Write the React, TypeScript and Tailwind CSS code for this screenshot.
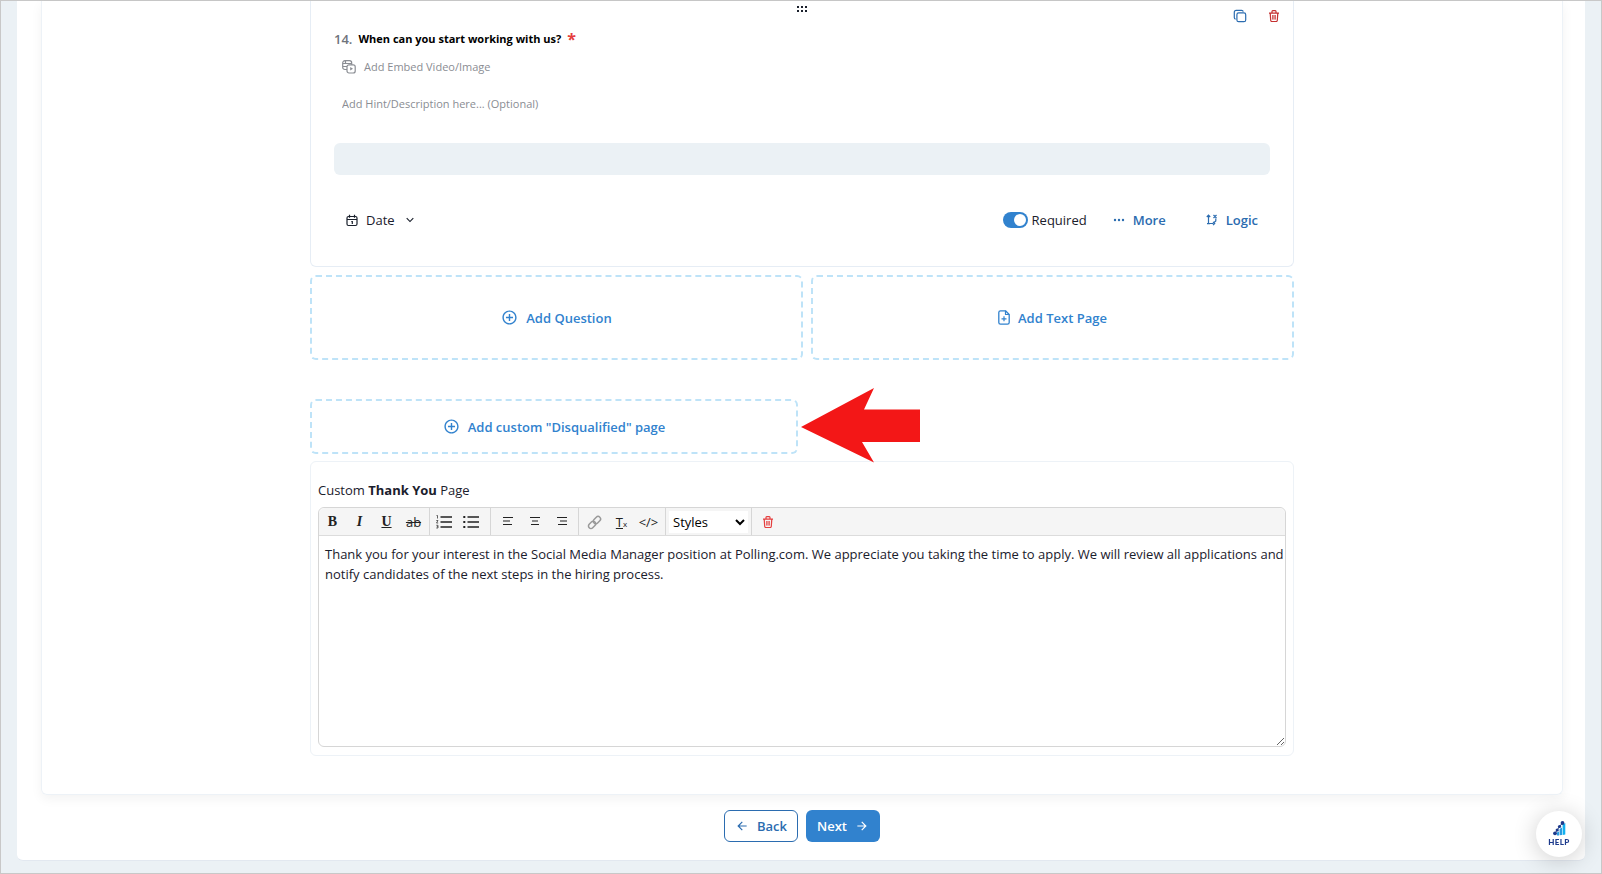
import { useState } from "react";
import {
  RiAddCircleLine,
  RiArrowDownSLine,
  RiArrowLeftLine,
  RiArrowRightLine,
} from "react-icons/ri";

const THANK_YOU =
  "Thank you for your interest in the Social Media Manager position at Polling.com. We appreciate you taking the time to apply. We will review all applications and notify candidates of the next steps in the hiring process.";

function DragHandle() {
  return (
    <svg width="12" height="8" viewBox="0 0 12 8" fill="#1a202c" aria-hidden="true">
      {[1, 5, 9].map((x) => (
        <g key={x}>
          <rect x={x} y="1" width="2" height="2" />
          <rect x={x} y="5" width="2" height="2" />
        </g>
      ))}
    </svg>
  );
}

function CopyIcon() {
  return (
    <svg width="14" height="14" viewBox="0 0 14 14" fill="none" stroke="#2b6cb0" strokeWidth="1.2" aria-hidden="true">
      <rect x="3.9" y="3.9" width="8.8" height="8.8" rx="1.8" />
      <path d="M2.6 10.2C1.6 10 1.3 9.4 1.3 8.6V3.2C1.3 2 2 1.3 3.2 1.3h5.4c.9 0 1.5.4 1.7 1.3" />
    </svg>
  );
}

function TrashIcon({ color }: { color: string }) {
  return (
    <svg width="12" height="12" viewBox="0 0 12 12" fill="none" stroke={color} aria-hidden="true">
      <path
        d="M1 3.1h10M2.2 3.1l.5 7.2c0 .7.4 1.2 1.1 1.2h4.4c.7 0 1.1-.5 1.1-1.2l.5-7.2M4 3V1.5C4 .9 4.3.6 4.8.6h2.4c.5 0 .8.3.8.9V3"
        strokeWidth="1.2"
      />
      <path d="M4.7 5v4.6M6 5v4.6M7.3 5v4.6" strokeWidth=".9" />
    </svg>
  );
}

function EmbedIcon() {
  return (
    <svg width="14" height="14" viewBox="0 0 14 14" fill="none" stroke="#8a8d93" strokeWidth="1.2" aria-hidden="true">
      <rect x="5" y="4.8" width="8.2" height="8.2" rx="2" />
      <path d="M5 9.5H3C1.6 9.5.7 8.7.7 7.3V3C.7 1.6 1.6.7 3 .7h4.5c1.3 0 2.2.9 2.2 2.2v1.900M.7 3.5h9M3.5.7v2.8M.7 6.5H5" />
      <path d="M8.2 7v3.6L11 8.8z" fill="#8a8d93" stroke="none" />
    </svg>
  );
}

function CalendarIcon() {
  return (
    <svg width="12" height="13" viewBox="0 0 12 13" fill="none" stroke="#1a202c" strokeWidth="1.2" aria-hidden="true">
      <rect x="1" y="2.5" width="10" height="9" rx="1.5" />
      <path d="M1 5.5h10M3.5.8v2.9M8.5.8v2.9" />
      <path d="M5.3 7.5H6.3V10" />
    </svg>
  );
}

function LogicIcon() {
  return (
    <svg width="12" height="12" viewBox="0 0 12 12" fill="none" stroke="#2b6cb0" strokeWidth="1.2" aria-hidden="true">
      <path d="M2.5 1.5v8h5M.8 3L2.5 1.2 4.2 3M1 9.7h3M7 7.8L8.7 9.5 7 11.2" />
      <path d="M7.5 1l3 3M10.5 1l-3 3M9.8 4.5v2.5L8 8.5" />
    </svg>
  );
}

function FileAddIcon() {
  return (
    <svg
      width="12"
      height="15"
      viewBox="0 0 12 15"
      fill="none"
      stroke="currentColor"
      strokeWidth="1.3"
      strokeLinejoin="round"
      aria-hidden="true"
    >
      <path d="M7.5.8H2.500C1.400.8.8 1.400.8 2.500v10c0 1.100.6 1.700 1.700 1.700h7c1.100 0 1.700-.6 1.700-1.700v-8z" />
      <path d="M7.500.8v3.700h3.700M6 6.300v5M3.500 8.800h5" strokeWidth="1.200" />
    </svg>
  );
}

function ListIcon({ ordered }: { ordered?: boolean }) {
  return (
    <svg width="16" height="14" viewBox="0 0 16 14" stroke="#222" fill="#222" aria-hidden="true">
      <path d="M4.5 2H16M4.5 7H16M4.5 12H16" strokeWidth="1.7" />
      {ordered ? (
        <path d="M.5.5h1v3M.3 5.5h1.7L.5 8h1.7M.3 10.3H2V13H.3M.8 11.7H2" fill="none" strokeWidth=".7" />
      ) : (
        <path d="M.3 1h2v2h-2zM.3 6h2v2h-2zM.3 11h2v2h-2z" stroke="none" />
      )}
    </svg>
  );
}

function AlignIcon({ d }: { d: string }) {
  return (
    <svg width="12" height="12" viewBox="0 0 12 12" stroke="#222" strokeWidth="1.2" aria-hidden="true">
      <path d={d} />
    </svg>
  );
}

function ChainIcon() {
  return (
    <svg width="15" height="15" viewBox="0 0 24 24" fill="none" stroke="#999" strokeWidth="2.4" aria-hidden="true">
      <g transform="rotate(-45 12 12)">
        <rect x="0" y="8" width="13" height="8" rx="4" />
        <rect x="11" y="8" width="13" height="8" rx="4" />
      </g>
    </svg>
  );
}

function HelpLogo() {
  return (
    <svg width="13" height="15" viewBox="0 0 13 15" aria-hidden="true">
      <path d="M9.6 3.5L12.3 2v11.5l-2.7.5z" fill="#12b0f0" />
      <path d="M6.6 8L9 6.5V14l-2.4.3zM3.9 11.5L6 10.5v4H3.9z" fill="#2a9be0" />
      <g fill="#1d3a8c">
        <circle cx="2" cy="12.3" r="1.9" />
        <circle cx="4.2" cy="9" r="1.6" />
        <circle cx="6.5" cy="5.5" r="1.6" />
        <circle cx="9.5" cy="2" r="1.9" />
      </g>
      <path d="M2 12.3L4.2 9l2.3-3.5 3-3.5" stroke="#1d3a8c" fill="none" />
    </svg>
  );
}

const dashed =
  "flex items-center justify-center gap-2 rounded-md border-2 border-dashed border-[#bee3f8] font-semibold text-[#3182ce]";
const tool = "flex h-7 w-[27px] items-center justify-center";

function QuestionCard() {
  const [required, setRequired] = useState(true);

  return (
    <section className="relative h-[266px] rounded-b-md border border-t-0 border-[#e6edf5] px-[23px]">
      <button type="button" aria-label="Move question" className="absolute top-1 left-1/2 -translate-x-1/2">
        <DragHandle />
      </button>
      <div className="flex h-7 items-center justify-end gap-[21px] pt-px">
        <button type="button" aria-label="Copy question">
          <CopyIcon />
        </button>
        <button type="button" aria-label="Delete question" className="-mr-2.5">
          <TrashIcon color="#c53030" />
        </button>
      </div>
      <h2 className="flex h-5 items-center gap-1.5">
        <span className="font-semibold text-[#6f747c]">14.</span>
        <span className="text-[11px] font-bold text-black">When can you start working with us?</span>
        <span className="text-base font-bold text-[#e53e3e]">*</span>
      </h2>
      <button type="button" className="mt-2 flex h-5 items-center gap-2 pl-2 text-[11px] text-[#8a8d93]">
        <EmbedIcon />
        Add Embed Video/Image
      </button>
      <input
        aria-label="Hint or description"
        placeholder="Add Hint/Description here... (Optional)"
        className="mt-2.5 block h-8 w-full px-2 text-[11px] placeholder:text-[#8a8d93]"
      />
      <div className="mt-6 h-8 rounded-md bg-[#ebf1f5]" />
      <div className="mt-8 flex h-[26px] items-center px-3">
        <button type="button" className="flex items-center gap-2 text-[#1a202c]">
          <CalendarIcon />
          Date
          <RiArrowDownSLine size={14} />
        </button>
        <label className="ml-auto flex items-center gap-1 text-[#1a202c]">
          <input
            type="checkbox"
            checked={required}
            onChange={(e) => setRequired(e.target.checked)}
            className="peer sr-only"
          />
          <span className="flex h-4 w-[25px] items-center rounded-full bg-[#cbd5e0] p-[2px] peer-checked:justify-end peer-checked:bg-[#3182ce]">
            <span className="size-3 rounded-full bg-white" />
          </span>
          Required
        </label>
        <button type="button" className="ml-[26px] flex items-center gap-2 font-semibold text-[#2b6cb0]">
          <svg width="12" height="4" viewBox="0 0 12 4" fill="#2b6cb0" aria-hidden="true">
            <circle cx="2" cy="2" r="1.2" />
            <circle cx="6" cy="2" r="1.2" />
            <circle cx="10" cy="2" r="1.2" />
          </svg>
          More
        </button>
        <button type="button" className="ml-10 flex items-center gap-2 font-semibold text-[#2b6cb0]">
          <LogicIcon />
          Logic
        </button>
      </div>
    </section>
  );
}

function Editor() {
  const [text, setText] = useState(THANK_YOU);

  return (
    <section className="mt-[7px] rounded-md border border-[#edf2f7] px-[7px] pt-[18px] pb-2">
      <h2 className="h-5 leading-5 text-[#1a202c]">
        Custom <b>Thank You</b> Page
      </h2>
      <div className="mt-[7px] rounded-md border border-[#d6d6d6]">
        <div className="flex h-7 items-center rounded-t-md border-b border-[#dcdcdc] bg-[#f5f5f5] text-[#222]">
          <div className="flex h-full w-[111px] border-r border-[#d6d6d6]">
            <button type="button" className={tool}>
              <b className="font-['Liberation_Serif',serif] text-sm">B</b>
            </button>
            <button type="button" className={tool}>
              <b className="font-['Liberation_Serif',serif] text-sm italic">I</b>
            </button>
            <button type="button" className={tool}>
              <b className="font-['Liberation_Serif',serif] text-sm underline">U</b>
            </button>
            <button type="button" className={tool}>
              <s>ab</s>
            </button>
          </div>
          <div className="flex h-full w-[61px] border-r border-[#d6d6d6]">
            <button type="button" aria-label="Numbered list" className={tool}>
              <ListIcon ordered />
            </button>
            <button type="button" aria-label="Bulleted list" className={tool}>
              <ListIcon />
            </button>
          </div>
          <div className="flex h-full w-[88px] border-r border-[#d6d6d6] pl-[3px]">
            <button type="button" aria-label="Align left" className={tool}>
              <AlignIcon d="M1 1.5h10M1 5h7M1 8.5h9" />
            </button>
            <button type="button" aria-label="Align center" className={tool}>
              <AlignIcon d="M1 1.5h10M3 5h6M2 8.5h8" />
            </button>
            <button type="button" aria-label="Align right" className={tool}>
              <AlignIcon d="M1 1.5h10M4 5h7M2 8.5h9" />
            </button>
          </div>
          <div className="flex h-full w-[87px] border-r border-[#d6d6d6] pl-[2px]">
            <button type="button" aria-label="Link" className={tool}>
              <ChainIcon />
            </button>
            <button type="button" aria-label="Clear formatting" className={tool}>
              <span className="underline">T</span>
              <sub className="text-[8px]">x</sub>
            </button>
            <button type="button" className={tool}>
              &lt;/&gt;
            </button>
          </div>
          <div className="flex h-full w-[86px] items-center border-r border-[#d6d6d6] px-[3px]">
            <select aria-label="Styles" className="h-[22px] w-full bg-white text-black">
              <option>Styles</option>
            </select>
          </div>
          <button type="button" aria-label="Delete page" className="flex h-7 w-8 items-center justify-center">
            <TrashIcon color="#e53e3e" />
          </button>
        </div>
        <textarea
          aria-label="Thank you message"
          value={text}
          onChange={(e) => setText(e.target.value)}
          className="block h-[210px] w-full resize py-2 pl-1.5 leading-5 text-[#1a202c]"
        />
      </div>
    </section>
  );
}

export default function App() {
  return (
    <div className="min-h-screen border border-[#c8c8c8] bg-[#ebf1f5] px-4 pb-3 font-['Open_Sans','Noto_Sans',sans-serif] text-[13px] leading-5">
      <div className="rounded-b-md border-b border-[#e2e8f0] bg-white pr-[22px] pb-[18px] pl-6">
        <main className="rounded-b-md border border-t-0 border-[#edf2f7] pb-[38px] shadow-[0_4px_12px_rgba(0,0,0,0.05)]">
          <div className="mx-auto max-w-[984px]">
            <QuestionCard />
            <div className="mt-2 flex gap-2">
              <button type="button" className={`${dashed} h-[85px] grow-[493] basis-0`}>
                <RiAddCircleLine size={17} />
                Add Question
              </button>
              <button type="button" className={`${dashed} h-[85px] grow-[483] basis-0`}>
                <FileAddIcon />
                Add Text Page
              </button>
            </div>
            <div className="relative mt-[39px]">
              <button type="button" className={`${dashed} h-[55px] w-[488px]`}>
                <RiAddCircleLine size={17} />
                Add custom "Disqualified" page
              </button>
              <svg
                width="120"
                height="75"
                viewBox="0 0 120 75"
                className="absolute -top-[11px] left-[491px]"
                aria-hidden="true"
              >
                <path d="M0 39L73 0 63 21.5H119V54H61L73 74.5z" fill="#f31717" />
              </svg>
            </div>
            <Editor />
          </div>
        </main>
        <div className="mt-[15px] flex justify-center gap-2 font-semibold">
          <button
            type="button"
            className="flex h-8 items-center gap-2 rounded-md border border-[#2b6cb0] px-2.5 text-[#2b6cb0]"
          >
            <RiArrowLeftLine size={14} />
            Back
          </button>
          <button type="button" className="flex h-8 items-center gap-2 rounded-md bg-[#3182ce] px-[11px] text-white">
            Next
            <RiArrowRightLine size={14} />
          </button>
        </div>
      </div>
      <button
        type="button"
        className="fixed right-5 bottom-[17px] flex size-[46px] flex-col items-center justify-center rounded-full bg-white shadow-[0_3px_24px_rgba(0,0,0,0.2)]"
      >
        <HelpLogo />
        <span className="font-['Lato',sans-serif] text-[8px] leading-3 font-black tracking-wider text-[#1d3a8c]">
          HELP
        </span>
      </button>
    </div>
  );
}
